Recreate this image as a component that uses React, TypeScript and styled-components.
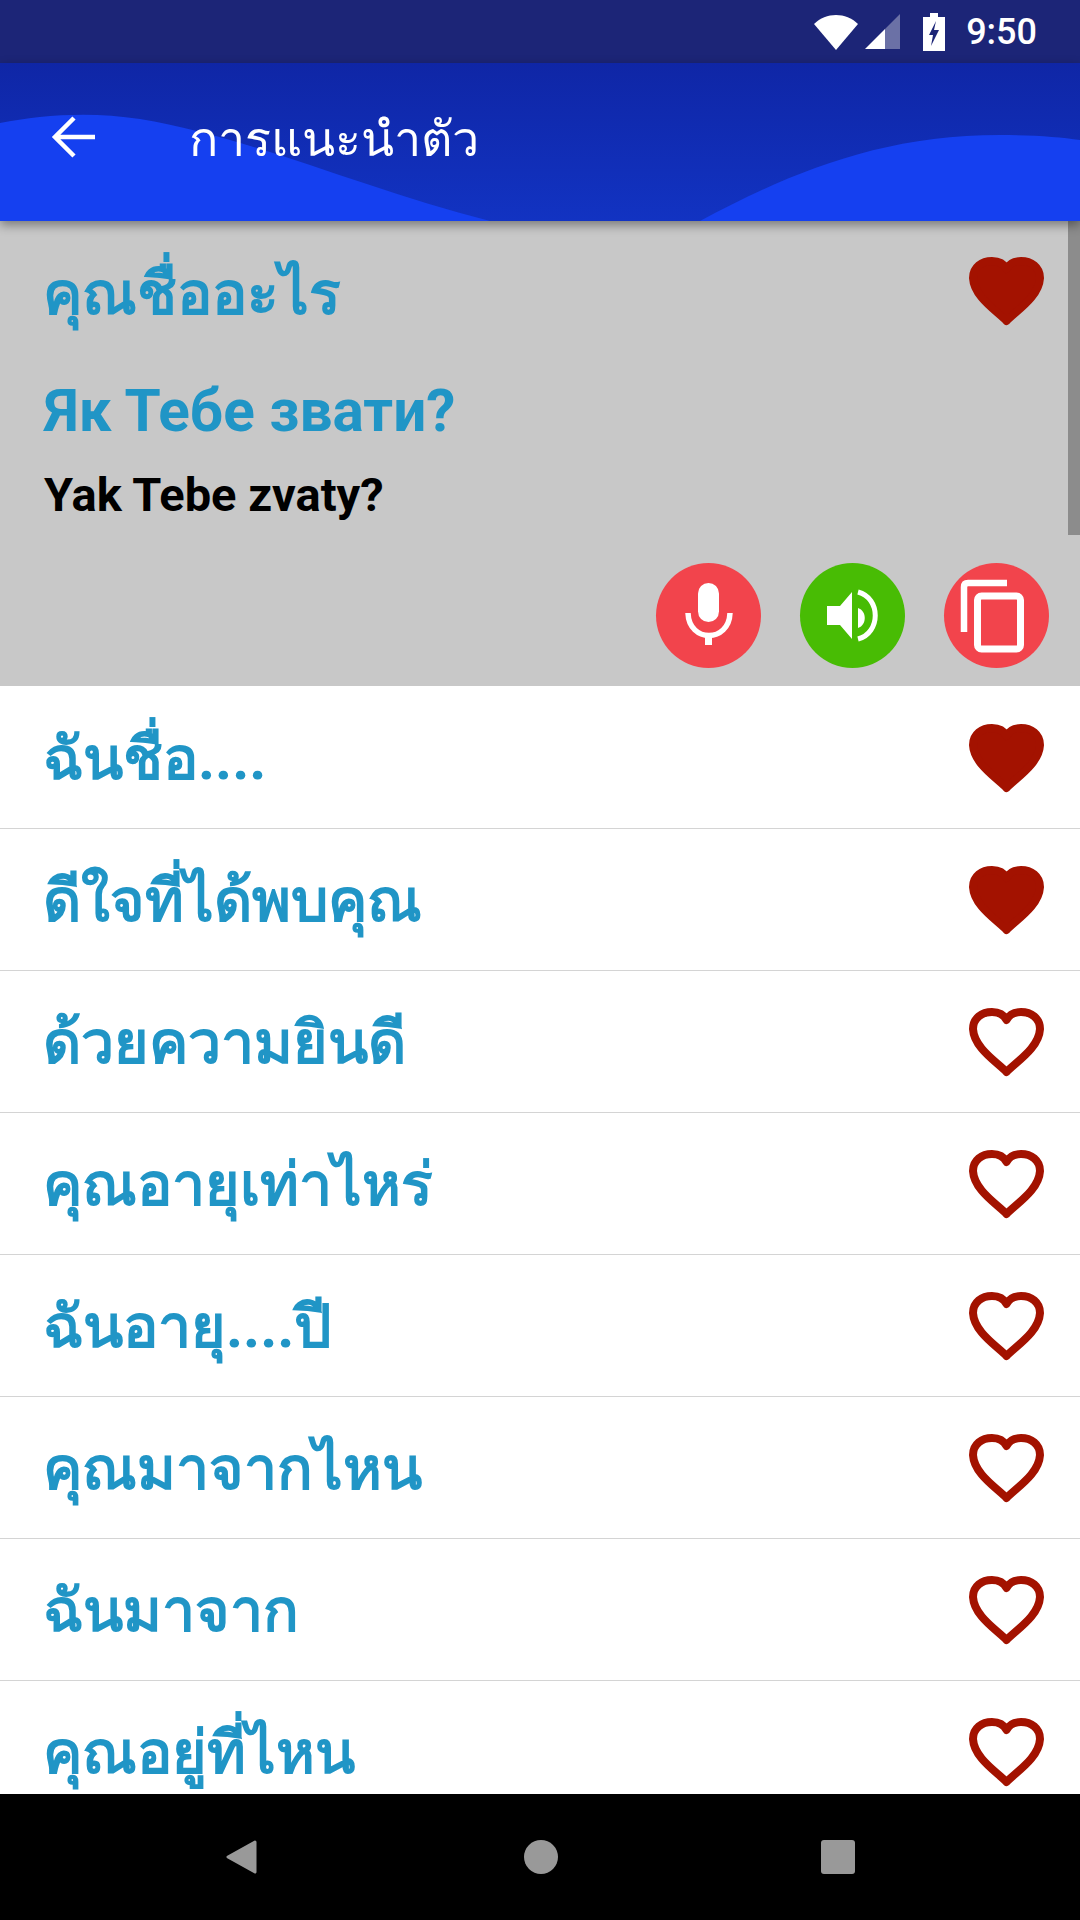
import React from 'react';
import styled, { createGlobalStyle } from 'styled-components';

const GlobalStyle = createGlobalStyle`
  html, body {
    margin: 0;
    padding: 0;
    background: #fff;
    font-family: Roboto, "Noto Sans", sans-serif;
  }
  * { box-sizing: border-box; }
`;

const Screen = styled.div`
  position: relative;
  width: 1080px;
  height: 1920px;
  display: flex;
  flex-direction: column;
  overflow: hidden;
`;

const StatusBar = styled.div`
  height: 63px;
  flex: none;
  background: #1c2577;
  display: flex;
  align-items: center;
  justify-content: flex-end;
  padding-right: 43px;
  color: #fff;
`;

const StatusIcon = styled.svg<{ $gap?: number }>`
  display: block;
  flex: none;
  margin-left: ${p => p.$gap ?? 0}px;
`;

const Clock = styled.span`
  font-size: 36px;
  font-weight: 500;
  margin-left: 21px;
`;

const AppBar = styled.header`
  position: relative;
  z-index: 2;
  height: 158px;
  flex: none;
  display: flex;
  align-items: center;
  padding: 0 0 10px 51px;
  background: linear-gradient(#0f26a6, #1233c2);
  box-shadow: 0 4px 10px rgba(0, 0, 0, 0.4);
`;

const Wave = styled.svg`
  position: absolute;
  left: 0;
  top: 0;
`;

const BackButton = styled.svg`
  position: relative;
  flex: none;
`;

const Title = styled.h1`
  position: relative;
  margin: 2px 0 0 92px;
  font-size: 48.5px;
  font-weight: 400;
  color: #fff;
`;

const Main = styled.main`
  flex: 1;
  min-height: 0;
  overflow: hidden;
`;

const Selected = styled.section`
  position: relative;
  height: 465px;
  margin-bottom: 1px;
  background: #c8c8c8;
  padding: 22px 31px 18px 43px;
  display: flex;
  flex-direction: column;
`;

const TopLine = styled.div`
  display: flex;
  align-items: center;
  justify-content: space-between;
  height: 95px;
  margin-right: 3px;
`;

const Phrase = styled.span`
  font-size: 59px;
  font-weight: 700;
  color: #2095c6;
`;

const SelectedPhrase = styled(Phrase)`
  margin-top: 4px;
`;

const Translation = styled.div`
  font-size: 58.5px;
  font-weight: 700;
  color: #2095c6;
  margin: 41px 0 0 1px;
  line-height: 64px;
`;

const Transliteration = styled.div`
  font-size: 47px;
  font-weight: 700;
  color: #000;
  margin: 25px 0 0 1px;
  line-height: 54px;
`;

const Actions = styled.div`
  margin-top: auto;
  display: flex;
  justify-content: flex-end;
  gap: 39px;
`;

const RoundButton = styled.button<{ $bg: string }>`
  width: 105px;
  height: 105px;
  padding: 0;
  border: 0;
  border-radius: 50%;
  background: ${p => p.$bg};
`;

const Row = styled.div`
  height: 142px;
  flex: none;
  display: flex;
  align-items: center;
  justify-content: space-between;
  padding: 0 34px 0 43px;
  border-bottom: 1px solid #d4d4d4;
  background: #fff;
`;

const Scrollbar = styled.div`
  position: absolute;
  right: 0;
  top: 221px;
  width: 12px;
  height: 314px;
  background: #8c8c8c;
`;

const NavBar = styled.nav`
  height: 126px;
  flex: none;
  background: #000;
  display: grid;
  grid-template-columns: 38px 36px 34px;
  justify-content: space-between;
  align-items: center;
  padding: 0 225px 0 222px;
`;

const Heart = ({ filled }: { filled: boolean }) => (
  <svg width="80" height="76" viewBox="0 0 80 76">
    <path
      d="M40.5 68 C31 58 8 44 7 25 C7 14 16 8 26 8 C33 8 38 11 40.5 16 C43 11 48 8 55 8 C65 8 74 14 74 25 C73 44 50 58 40.5 68 Z"
      fill={filled ? '#a31200' : 'none'}
      stroke="#a31200"
      strokeWidth="8"
      strokeLinejoin="round"
    />
  </svg>
);

const MicIcon = () => (
  <svg width="105" height="105" viewBox="0 0 105 105">
    <rect x="42" y="20" width="21" height="39" rx="10.5" fill="#fff" />
    <path d="M32 50 C33 80 73 80 74 50" fill="none" stroke="#fff" strokeWidth="5.5" />
    <rect x="49" y="70" width="7" height="12" fill="#fff" />
  </svg>
);

const SpeakerIcon = () => (
  <svg width="105" height="105" viewBox="0 0 105 105">
    <path d="M27 43 H40 L52 29 V76 L40 62 H27 Z" fill="#fff" />
    <path d="M58 45 C67 48 67 62 58 65 Z" fill="#fff" />
    <path d="M58 29 C81 35 81 70 58 76" fill="none" stroke="#fff" strokeWidth="5" />
  </svg>
);

const CopyIcon = () => (
  <svg width="105" height="105" viewBox="0 0 105 105">
    <path d="M63 20 H24 Q20 20 20 24 V69" fill="none" stroke="#fff" strokeWidth="6.5" />
    <rect x="33.5" y="33" width="43" height="53" rx="4" fill="none" stroke="#fff" strokeWidth="7" />
  </svg>
);

const phrases = [
  { text: 'ฉันชื่อ....', liked: true },
  { text: 'ดีใจที่ได้พบคุณ', liked: true },
  { text: 'ด้วยความยินดี', liked: false },
  { text: 'คุณอายุเท่าไหร่', liked: false },
  { text: 'ฉันอายุ....ปี', liked: false },
  { text: 'คุณมาจากไหน', liked: false },
  { text: 'ฉันมาจาก', liked: false },
  { text: 'คุณอยู่ที่ไหน', liked: false },
];

const App: React.FC = () => (
  <Screen>
    <GlobalStyle />
    <StatusBar>
      <StatusIcon width="46" height="36" viewBox="0 0 46 36">
        <path d="M1 10 C13 -2 33 -2 45 10 L23 36 Z" fill="#fff" />
      </StatusIcon>
      <StatusIcon $gap={6} width="36" height="36" viewBox="0 0 36 36">
        <path d="M35 0 V35 H20 V15 Z" fill="#fff" fillOpacity="0.35" />
        <path d="M20 15 V35 H0 Z" fill="#fff" />
      </StatusIcon>
      <StatusIcon $gap={22} width="22" height="38" viewBox="0 0 22 38">
        <path d="M7 0 H15 V4 H22 V38 H0 V4 H7 Z" fill="#fff" />
        <path d="M13 8 L6 22 H10 L8 33 L16 17 H11 Z" fill="#1c2577" />
      </StatusIcon>
      <Clock>9:50</Clock>
    </StatusBar>
    <AppBar>
      <Wave width="1080" height="158" viewBox="0 0 1080 158">
        <path
          d="M0 60 C40 52 90 48 140 56 C250 74 360 125 490 158 L700 158 C790 110 880 72 1000 72 C1035 72 1060 74 1080 77 V158 H0 Z"
          fill="#1540f0"
        />
      </Wave>
      <BackButton width="46" height="42" viewBox="0 0 46 42">
        <path d="M44 21 H5 M23 2 L4 21 L23 40" fill="none" stroke="#fff" strokeWidth="4.5" />
      </BackButton>
      <Title>การแนะนำตัว</Title>
    </AppBar>
    <Main>
      <Selected>
        <TopLine>
          <SelectedPhrase>คุณชื่ออะไร</SelectedPhrase>
          <Heart filled />
        </TopLine>
        <Translation>Як Тебе звати?</Translation>
        <Transliteration>Yak Tebe zvaty?</Transliteration>
        <Actions>
          <RoundButton $bg="#f2444c"><MicIcon /></RoundButton>
          <RoundButton $bg="#48bc04"><SpeakerIcon /></RoundButton>
          <RoundButton $bg="#f2444c"><CopyIcon /></RoundButton>
        </Actions>
      </Selected>
      {phrases.map(p => (
        <Row key={p.text}>
          <Phrase>{p.text}</Phrase>
          <Heart filled={p.liked} />
        </Row>
      ))}
    </Main>
    <Scrollbar />
    <NavBar>
      <svg width="38" height="36" viewBox="0 0 38 36">
        <path d="M33 3 L6 18 L33 33 Z" fill="#999" stroke="#999" strokeWidth="3" strokeLinejoin="round" />
      </svg>
      <svg width="36" height="36" viewBox="0 0 36 36">
        <circle cx="18" cy="18" r="17" fill="#999" />
      </svg>
      <svg width="34" height="34" viewBox="0 0 34 34">
        <rect width="34" height="34" rx="3" fill="#999" />
      </svg>
    </NavBar>
  </Screen>
);

export default App;
